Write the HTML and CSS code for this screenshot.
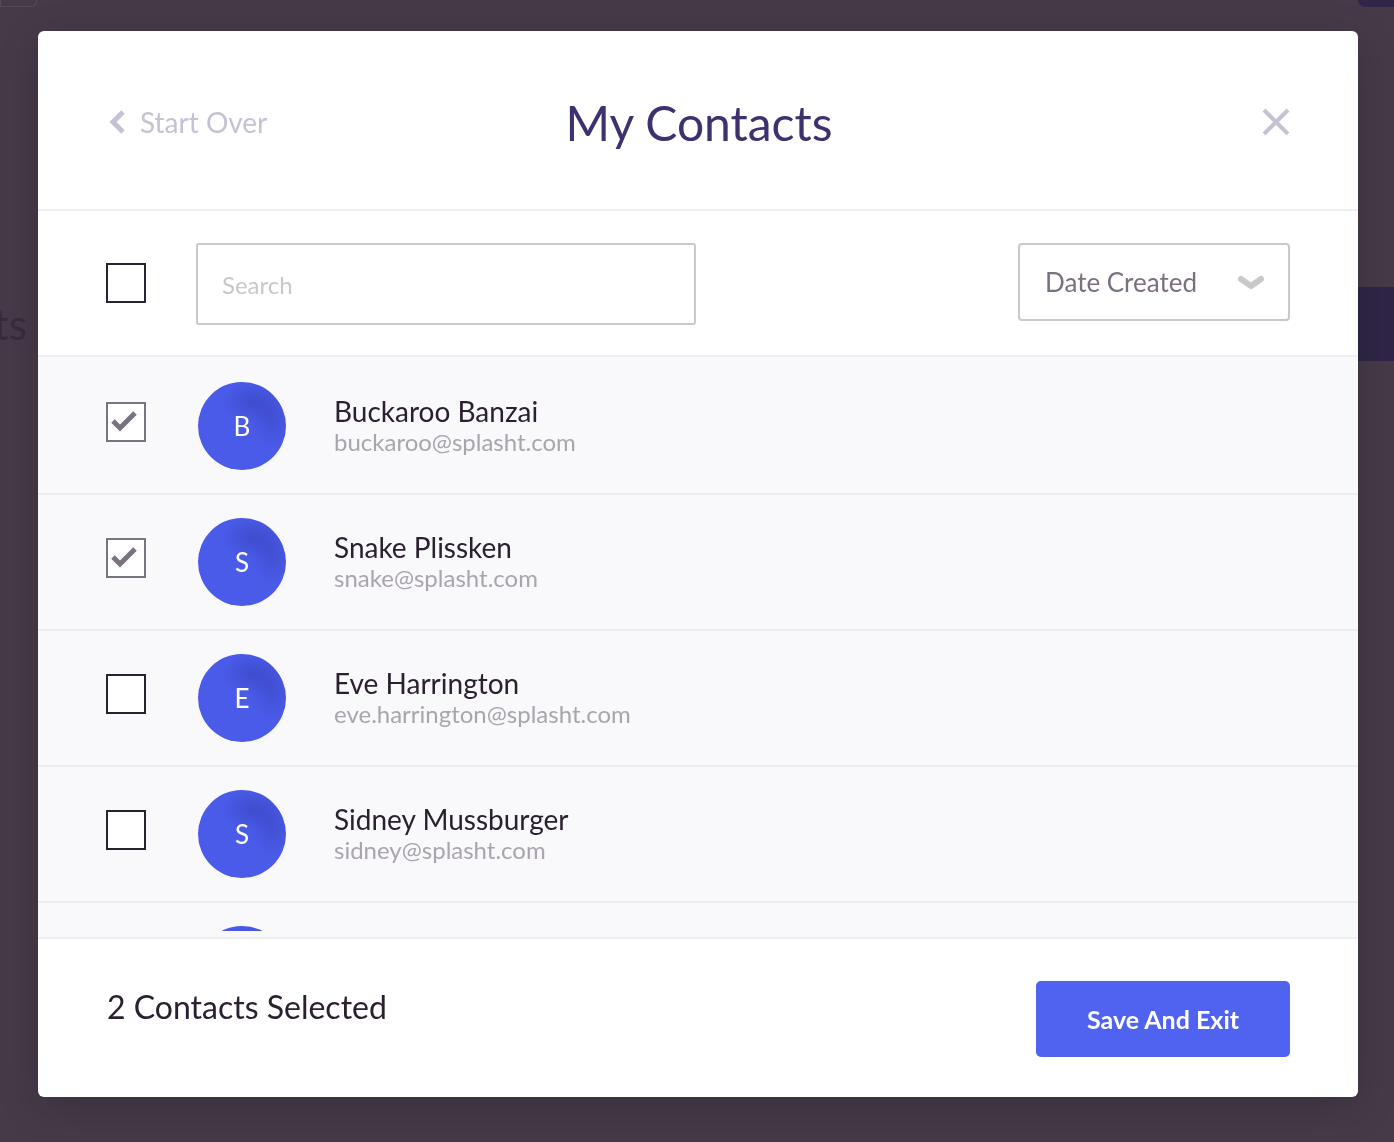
FILE: index.html
```html
<!DOCTYPE html>
<html lang="en">
<head>
    <meta charset="UTF-8">
    <meta name="viewport" content="width=device-width, initial-scale=1.0">
    <title>My Contacts</title>
    <link rel="stylesheet" href="styles.css">
</head>
<body>

<div class="page">
    <div class="page-top">
        <div class="page-nav"></div>
        <div class="page-user"></div>
    </div>
    <div class="page-head">
        <h2 class="page-title">Contacts</h2>
        <div class="page-action"></div>
    </div>
</div>

<div class="overlay">
    <div class="modal">
        <div class="modal-header">
            <a class="back-link" href="#">
                <svg width="18" height="26" viewBox="0 0 18 26">
                    <polyline points="15,3 5,13 15,23" fill="none" stroke="#c6c1d3" stroke-width="5"/>
                </svg>
                Start Over
            </a>
            <h1 class="modal-title">My Contacts</h1>
            <button class="close-btn">
                <svg width="28" height="28" viewBox="0 0 28 28">
                    <path d="M2 2 L26 26 M26 2 L2 26" stroke="#c6c1d3" stroke-width="4"/>
                </svg>
            </button>
        </div>

        <div class="toolbar">
            <span class="check"></span>
            <input class="search" type="text" placeholder="Search">
            <div class="sort-select">
                <span>Date Created</span>
                <svg width="28" height="18" viewBox="0 0 28 18">
                    <polyline points="4,6 14,13 24,6" fill="none" stroke="#c9c9c9" stroke-width="6" stroke-linecap="round" stroke-linejoin="round"/>
                </svg>
            </div>
        </div>

        <div class="contact-list">
            <div class="scroller">
                <div class="contact-row">
                    <span class="check checked">
                        <svg width="36" height="36" viewBox="0 0 36 36"><polyline points="5,17 12,24 27,9" fill="none" stroke="#7a7380" stroke-width="5"/></svg>
                    </span>
                    <div class="avatar">B</div>
                    <div class="contact-info">
                        <div class="contact-name">Buckaroo Banzai</div>
                        <div class="contact-email">buckaroo@splasht.com</div>
                    </div>
                </div>
                <div class="contact-row">
                    <span class="check checked">
                        <svg width="36" height="36" viewBox="0 0 36 36"><polyline points="5,17 12,24 27,9" fill="none" stroke="#7a7380" stroke-width="5"/></svg>
                    </span>
                    <div class="avatar">S</div>
                    <div class="contact-info">
                        <div class="contact-name">Snake Plissken</div>
                        <div class="contact-email">snake@splasht.com</div>
                    </div>
                </div>
                <div class="contact-row">
                    <span class="check"></span>
                    <div class="avatar">E</div>
                    <div class="contact-info">
                        <div class="contact-name">Eve Harrington</div>
                        <div class="contact-email">eve.harrington@splasht.com</div>
                    </div>
                </div>
                <div class="contact-row">
                    <span class="check"></span>
                    <div class="avatar">S</div>
                    <div class="contact-info">
                        <div class="contact-name">Sidney Mussburger</div>
                        <div class="contact-email">sidney@splasht.com</div>
                    </div>
                </div>
                <div class="contact-row">
                    <span class="check"></span>
                    <div class="avatar"></div>
                </div>
            </div>
        </div>

        <div class="modal-footer">
            <div class="selected-count">2 Contacts Selected</div>
            <button class="save-btn">Save And Exit</button>
        </div>
    </div>
</div>

</body>
</html>
```

FILE: styles.css
```css
* {
    box-sizing: border-box;
}

body {
    margin: 0;
    font-family: "Lato", "Noto Sans", sans-serif;
    background-color: #463a48;
    overflow: hidden;
    height: 1142px;
}

/* page behind the overlay */
.page {
    overflow: hidden;
}

.page-top {
    display: flex;
    justify-content: space-between;
    height: 7px;
}

.page-nav {
    width: 37px;
    height: 7px;
    border: 1px solid #564a58;
    border-top: none;
    border-radius: 0 0 6px 0;
}

.page-user {
    width: 36px;
    height: 7px;
    background-color: #30264a;
    border-radius: 0 0 0 8px;
}

.page-head {
    display: flex;
    justify-content: space-between;
    align-items: center;
    margin-top: 280px;
    height: 74px;
}

.page-title {
    margin: 0 0 0 -137px;
    font-size: 42px;
    font-weight: 400;
    color: #372c3b;
}

.page-action {
    width: 36px;
    height: 74px;
    background-color: #2f2647;
}

/* modal */
.overlay {
    position: fixed;
    top: 0;
    left: 0;
    right: 0;
    bottom: 0;
    padding: 31px 0 0 38px;
}

.modal {
    width: 1320px;
    height: 1066px;
    background-color: #fff;
    border-radius: 6px;
    box-shadow: 0 10px 40px rgba(0, 0, 0, 0.18);
    display: flex;
    flex-direction: column;
    overflow: hidden;
}

.modal-header {
    display: flex;
    align-items: center;
    justify-content: space-between;
    height: 180px;
    padding: 4px 68px 0 70px;
    border-bottom: 2px solid #efeff2;
}

.back-link {
    display: flex;
    align-items: center;
    gap: 14px;
    font-size: 28px;
    color: #c6c1d3;
    text-decoration: none;
    width: 240px;
}

.modal-title {
    margin: 0;
    font-size: 48px;
    font-weight: 400;
    color: #3f3070;
}

.close-btn {
    width: 240px;
    display: flex;
    justify-content: flex-end;
    padding: 0;
    border: none;
    background: none;
}

.toolbar {
    display: flex;
    align-items: flex-start;
    height: 146px;
    padding: 32px 68px 0 68px;
    border-bottom: 2px solid #efeff2;
}

.check {
    flex: none;
    display: block;
    width: 40px;
    height: 40px;
    border: 2px solid #2b2230;
    background-color: #fff;
}

.check.checked {
    border-color: #7a7380;
}

.check svg {
    display: block;
}

.toolbar .check {
    margin-top: 20px;
}

.contact-row .check {
    margin-bottom: 8px;
}

.search {
    margin-left: 50px;
    width: 500px;
    height: 82px;
    border: 2px solid #c9c9c9;
    border-radius: 3px;
    padding: 0 24px;
    font-family: "Lato", sans-serif;
    font-size: 24px;
    color: #333;
    outline: none;
}

.search::placeholder {
    color: #c8c8c8;
}

.sort-select {
    margin-left: auto;
    width: 272px;
    height: 78px;
    display: flex;
    align-items: center;
    justify-content: space-between;
    padding: 0 23px 0 25px;
    border: 2px solid #c9c9c9;
    border-radius: 4px;
    font-size: 26px;
    color: #7a7080;
}

.contact-list {
    height: 582px;
    padding-bottom: 6px;
    background-color: #f9f9fb;
    border-bottom: 2px solid #efeff2;
}

.scroller {
    height: 574px;
    padding-top: 2px;
    overflow: hidden;
}

.contact-row {
    display: flex;
    align-items: center;
    height: 136px;
    padding: 0 68px;
    border-bottom: 2px solid #ececf0;
}

.avatar {
    flex: none;
    width: 88px;
    height: 88px;
    margin-left: 52px;
    border-radius: 50%;
    display: flex;
    align-items: center;
    justify-content: center;
    font-size: 26px;
    color: #fff;
    background-color: #4a5be9;
    background-image:
        radial-gradient(ellipse 30px 22px at 62% 22%, rgba(48, 58, 170, 0.45), transparent),
        radial-gradient(ellipse 22px 30px at 84% 42%, rgba(48, 58, 170, 0.35), transparent);
}

.contact-info {
    margin-left: 48px;
}

.contact-name {
    font-size: 28px;
    line-height: 32px;
    color: #2a2030;
}

.contact-email {
    font-size: 24px;
    line-height: 30px;
    color: #a9a4ad;
}

.modal-footer {
    flex: 1;
    display: flex;
    align-items: flex-start;
    justify-content: space-between;
    padding: 42px 68px 0 69px;
}

.selected-count {
    margin-top: 6px;
    font-size: 32px;
    color: #2a2030;
}

.save-btn {
    width: 254px;
    height: 76px;
    border: none;
    border-radius: 5px;
    background-color: #4f62f0;
    color: #fff;
    font-family: "Lato", sans-serif;
    font-size: 25px;
    font-weight: 700;
    cursor: pointer;
}
```
